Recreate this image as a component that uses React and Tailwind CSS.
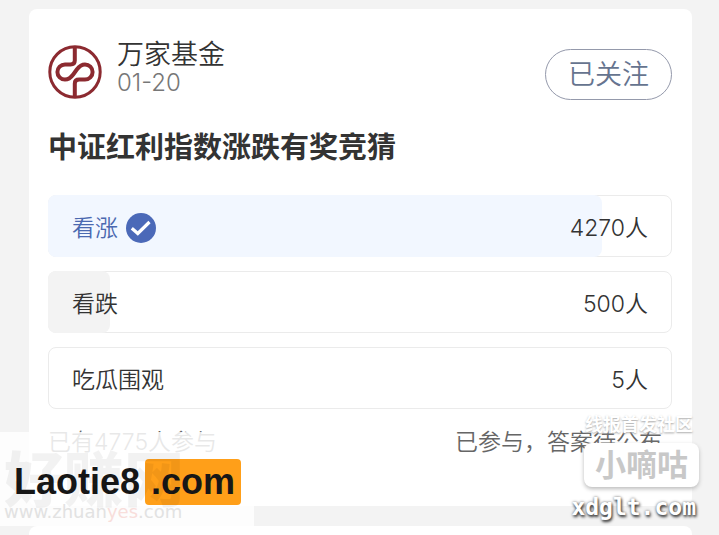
import React from "react";

const TOTAL = 4775;

const options = [
  { id: "up", label: "看涨", votes: 4270, selected: true },
  { id: "down", label: "看跌", votes: 500, selected: false },
  { id: "watch", label: "吃瓜围观", votes: 5, selected: false },
];

function FundLogo() {
  return (
    <svg viewBox="0 0 54 54" className="size-[54px] shrink-0" fill="none" stroke="#8c2a30" role="img" aria-label="万家基金">
      <circle cx="27" cy="27" r="25.2" strokeWidth="3" />
      <path
        d="M26.800 2V15.500Q26.800 19.400 22.500 19.400H17A7.6 7.6 0 0 0 17 34.600C21 34.600 23 32.500 25.200 29.500L28.800 24.500C31 21.500 33 19.400 37 19.400A7.6 7.6 0 0 1 37 34.600H31.200Q26.800 34.600 26.800 38.500V52"
        strokeWidth="4"
      />
    </svg>
  );
}

function CheckBadge() {
  return (
    <svg viewBox="0 0 30 30" className="size-[30px]" aria-hidden="true">
      <circle cx="15" cy="15" r="15" fill="#4b69b8" />
      <path d="M5.800 15.200L11.800 20.500L23.500 9" fill="none" stroke="#fff" strokeWidth="3.200" />
    </svg>
  );
}

function PollOption({ option }) {
  const percent = Math.floor((option.votes / TOTAL) * 100);
  return (
    <label className="relative flex h-[62px] items-center justify-between rounded-lg border border-[#ebebeb] px-[23px] pt-[3px] text-[23px] leading-8 text-[#333]">
      <input type="radio" name="poll" defaultChecked={option.selected} className="sr-only" />
      {percent > 0 && (
        <span
          className={`absolute -inset-y-px -left-px rounded-lg ${option.selected ? "bg-[#f2f7ff]" : "bg-[#f3f3f3]"}`}
          style={{ width: `${percent}%` }}
        />
      )}
      <span className={`relative flex items-center gap-2 ${option.selected ? "text-[#4b69b0]" : ""}`}>
        {option.label}
        {option.selected && <CheckBadge />}
      </span>
      <span className="relative">{option.votes}人</span>
    </label>
  );
}

function SiteBadgeLeft() {
  return (
    <div className="absolute left-0 top-[432px] h-[94px] w-[254px] bg-white/85">
      <div className="absolute left-[14px] top-[27px] flex items-center font-['Liberation_Sans',sans-serif] text-[36px] font-bold leading-[46px] text-[#171717]">
        <span>Laotie8</span>
        <span className="ml-[5px] rounded bg-[#ff9f19] px-1.5">.com</span>
      </div>
      <div className="absolute left-1 top-[18px] text-[60px] font-black leading-[60px] text-black/5">好赚网</div>
      <div className="absolute left-1 top-[70px] font-['DejaVu_Sans',sans-serif] text-[18px] font-normal leading-5 text-[#e2e2e2]">
        www.zhuan<span className="text-[#f8dedb]">yes</span>.com
      </div>
    </div>
  );
}

function SiteBadgeRight() {
  return (
    <div className="absolute right-5 top-[414px] flex flex-col items-end font-bold">
      <div className="mr-1.5 text-[18px] leading-[22px] text-white [text-shadow:0_1px_2px_#aaa]">线报首发社区</div>
      <div className="mt-[7px] rounded-lg bg-white px-[11px] text-[31px] leading-[44px] text-[#c8c8c8] shadow-[0_2px_4px_#bbb]">
        小嘀咕
      </div>
      <div className="mr-[3px] mt-[6px] font-['DejaVu_Sans_Mono',monospace] text-[23px] leading-7 text-white [text-shadow:1px_2px_3px_#333,0_0_3px_#777]">
        xdglt.com
      </div>
    </div>
  );
}

export default function App() {
  return (
    <div className="relative flex min-h-screen flex-col gap-5 overflow-hidden bg-[#f3f3f3] pl-[29px] pr-[27px] pt-[9px] font-[Inter,'Noto_Sans_CJK_SC',sans-serif] font-[350] text-[#333]">
      <main className="rounded-lg bg-white pb-12 pl-[19px] pr-5 pt-[28px]">
        <header className="flex items-start justify-between">
          <div className="flex items-start gap-[15px]">
            <div className="pt-2">
              <FundLogo />
            </div>
            <div>
              <div className="text-[27px] leading-9">万家基金</div>
              <div className="text-[24px] leading-5 text-[#777]">01-20</div>
            </div>
          </div>
          <button type="button" className="mt-3 h-[51px] w-[127px] rounded-full border border-[#9499ab] text-[27px] leading-9 text-[#66748f]">
            已关注
          </button>
        </header>
        <h1 id="poll-title" className="mt-7 text-[29px] font-bold leading-10">中证红利指数涨跌有奖竞猜</h1>
        <fieldset aria-labelledby="poll-title" className="mt-[27px] flex flex-col gap-[14px]">
          {options.map((o) => (
            <PollOption key={o.id} option={o} />
          ))}
        </fieldset>
        <footer className="mt-[17px] flex justify-between text-[23px] leading-8 text-[#666]">
          <span>已有{TOTAL}人参与</span>
          <span className="mr-[10px]">已参与，答案待公布</span>
        </footer>
      </main>
      <section className="flex-1 rounded-t-lg bg-white" />
      <SiteBadgeLeft />
      <SiteBadgeRight />
    </div>
  );
}
